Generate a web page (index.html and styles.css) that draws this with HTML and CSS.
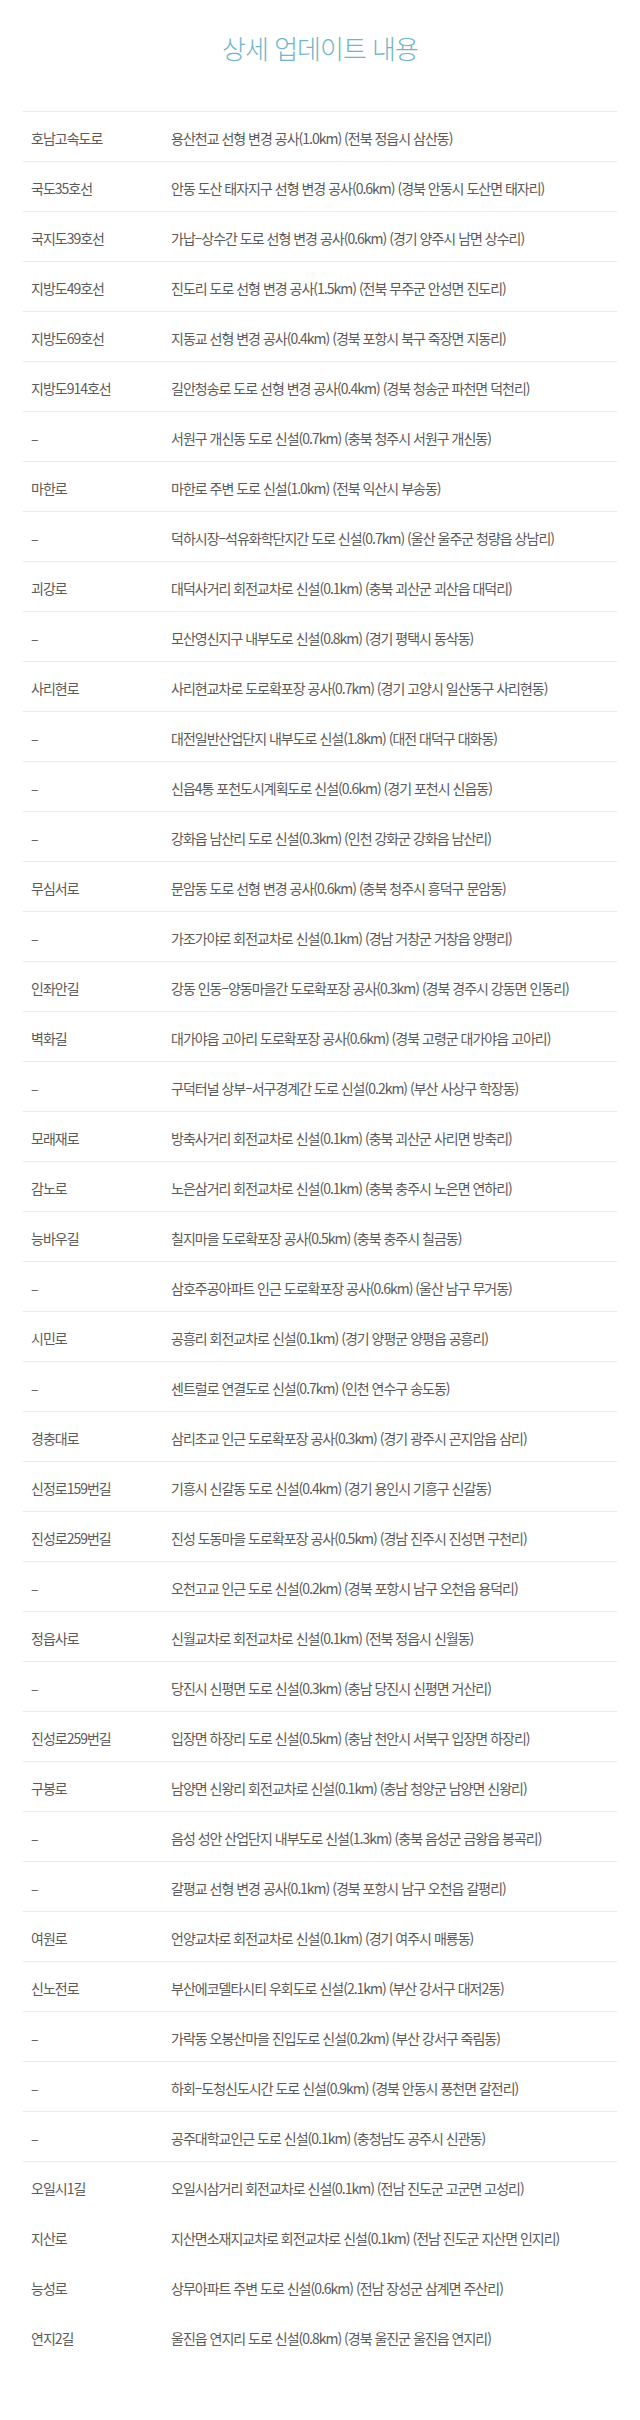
FILE: index.html
```html
<!DOCTYPE html>
<html lang="ko">
<head>
    <meta charset="UTF-8">
    <meta name="viewport" content="width=device-width, initial-scale=1.0">
    <title>상세 업데이트 내용</title>
    <link rel="stylesheet" href="styles.css">
</head>
<body>
    <h2 class="title">상세 업데이트 내용</h2>
    <div class="update-list">
        <div class="row"><div class="road">호남고속도로</div><div class="desc">용산천교 선형 변경 공사(1.0km) (전북 정읍시 삼산동)</div></div>
        <div class="row"><div class="road">국도35호선</div><div class="desc">안동 도산 태자지구 선형 변경 공사(0.6km) (경북 안동시 도산면 태자리)</div></div>
        <div class="row"><div class="road">국지도39호선</div><div class="desc">가납–상수간 도로 선형 변경 공사(0.6km) (경기 양주시 남면 상수리)</div></div>
        <div class="row"><div class="road">지방도49호선</div><div class="desc">진도리 도로 선형 변경 공사(1.5km) (전북 무주군 안성면 진도리)</div></div>
        <div class="row"><div class="road">지방도69호선</div><div class="desc">지동교 선형 변경 공사(0.4km) (경북 포항시 북구 죽장면 지동리)</div></div>
        <div class="row"><div class="road">지방도914호선</div><div class="desc">길안청송로 도로 선형 변경 공사(0.4km) (경북 청송군 파천면 덕천리)</div></div>
        <div class="row"><div class="road">–</div><div class="desc">서원구 개신동 도로 신설(0.7km) (충북 청주시 서원구 개신동)</div></div>
        <div class="row"><div class="road">마한로</div><div class="desc">마한로 주변 도로 신설(1.0km) (전북 익산시 부송동)</div></div>
        <div class="row"><div class="road">–</div><div class="desc">덕하시장–석유화학단지간 도로 신설(0.7km) (울산 울주군 청량읍 상남리)</div></div>
        <div class="row"><div class="road">괴강로</div><div class="desc">대덕사거리 회전교차로 신설(0.1km) (충북 괴산군 괴산읍 대덕리)</div></div>
        <div class="row"><div class="road">–</div><div class="desc">모산영신지구 내부도로 신설(0.8km) (경기 평택시 동삭동)</div></div>
        <div class="row"><div class="road">사리현로</div><div class="desc">사리현교차로 도로확포장 공사(0.7km) (경기 고양시 일산동구 사리현동)</div></div>
        <div class="row"><div class="road">–</div><div class="desc">대전일반산업단지 내부도로 신설(1.8km) (대전 대덕구 대화동)</div></div>
        <div class="row"><div class="road">–</div><div class="desc">신읍4통 포천도시계획도로 신설(0.6km) (경기 포천시 신읍동)</div></div>
        <div class="row"><div class="road">–</div><div class="desc">강화읍 남산리 도로 신설(0.3km) (인천 강화군 강화읍 남산리)</div></div>
        <div class="row"><div class="road">무심서로</div><div class="desc">문암동 도로 선형 변경 공사(0.6km) (충북 청주시 흥덕구 문암동)</div></div>
        <div class="row"><div class="road">–</div><div class="desc">가조가야로 회전교차로 신설(0.1km) (경남 거창군 거창읍 양평리)</div></div>
        <div class="row"><div class="road">인좌안길</div><div class="desc">강동 인동–양동마을간 도로확포장 공사(0.3km) (경북 경주시 강동면 인동리)</div></div>
        <div class="row"><div class="road">벽화길</div><div class="desc">대가야읍 고아리 도로확포장 공사(0.6km) (경북 고령군 대가야읍 고아리)</div></div>
        <div class="row"><div class="road">–</div><div class="desc">구덕터널 상부–서구경계간 도로 신설(0.2km) (부산 사상구 학장동)</div></div>
        <div class="row"><div class="road">모래재로</div><div class="desc">방축사거리 회전교차로 신설(0.1km) (충북 괴산군 사리면 방축리)</div></div>
        <div class="row"><div class="road">감노로</div><div class="desc">노은삼거리 회전교차로 신설(0.1km) (충북 충주시 노은면 연하리)</div></div>
        <div class="row"><div class="road">능바우길</div><div class="desc">칠지마을 도로확포장 공사(0.5km) (충북 충주시 칠금동)</div></div>
        <div class="row"><div class="road">–</div><div class="desc">삼호주공아파트 인근 도로확포장 공사(0.6km) (울산 남구 무거동)</div></div>
        <div class="row"><div class="road">시민로</div><div class="desc">공흥리 회전교차로 신설(0.1km) (경기 양평군 양평읍 공흥리)</div></div>
        <div class="row"><div class="road">–</div><div class="desc">센트럴로 연결도로 신설(0.7km) (인천 연수구 송도동)</div></div>
        <div class="row"><div class="road">경충대로</div><div class="desc">삼리초교 인근 도로확포장 공사(0.3km) (경기 광주시 곤지암읍 삼리)</div></div>
        <div class="row"><div class="road">신정로159번길</div><div class="desc">기흥시 신갈동 도로 신설(0.4km) (경기 용인시 기흥구 신갈동)</div></div>
        <div class="row"><div class="road">진성로259번길</div><div class="desc">진성 도동마을 도로확포장 공사(0.5km) (경남 진주시 진성면 구천리)</div></div>
        <div class="row"><div class="road">–</div><div class="desc">오천고교 인근 도로 신설(0.2km) (경북 포항시 남구 오천읍 용덕리)</div></div>
        <div class="row"><div class="road">정읍사로</div><div class="desc">신월교차로 회전교차로 신설(0.1km) (전북 정읍시 신월동)</div></div>
        <div class="row"><div class="road">–</div><div class="desc">당진시 신평면 도로 신설(0.3km) (충남 당진시 신평면 거산리)</div></div>
        <div class="row"><div class="road">진성로259번길</div><div class="desc">입장면 하장리 도로 신설(0.5km) (충남 천안시 서북구 입장면 하장리)</div></div>
        <div class="row"><div class="road">구봉로</div><div class="desc">남양면 신왕리 회전교차로 신설(0.1km) (충남 청양군 남양면 신왕리)</div></div>
        <div class="row"><div class="road">–</div><div class="desc">음성 성안 산업단지 내부도로 신설(1.3km) (충북 음성군 금왕읍 봉곡리)</div></div>
        <div class="row"><div class="road">–</div><div class="desc">갈평교 선형 변경 공사(0.1km) (경북 포항시 남구 오천읍 갈평리)</div></div>
        <div class="row"><div class="road">여원로</div><div class="desc">언양교차로 회전교차로 신설(0.1km) (경기 여주시 매룡동)</div></div>
        <div class="row"><div class="road">신노전로</div><div class="desc">부산에코델타시티 우회도로 신설(2.1km) (부산 강서구 대저2동)</div></div>
        <div class="row"><div class="road">–</div><div class="desc">가락동 오봉산마을 진입도로 신설(0.2km) (부산 강서구 죽림동)</div></div>
        <div class="row"><div class="road">–</div><div class="desc">하회–도청신도시간 도로 신설(0.9km) (경북 안동시 풍천면 갈전리)</div></div>
        <div class="row"><div class="road">–</div><div class="desc">공주대학교인근 도로 신설(0.1km) (충청남도 공주시 신관동)</div></div>
        <div class="row"><div class="road">오일시1길</div><div class="desc">오일시삼거리 회전교차로 신설(0.1km) (전남 진도군 고군면 고성리)</div></div>
        <div class="row no-line"><div class="road">지산로</div><div class="desc">지산면소재지교차로 회전교차로 신설(0.1km) (전남 진도군 지산면 인지리)</div></div>
        <div class="row no-line"><div class="road">능성로</div><div class="desc">상무아파트 주변 도로 신설(0.6km) (전남 장성군 삼계면 주산리)</div></div>
        <div class="row no-line"><div class="road">연지2길</div><div class="desc">울진읍 연지리 도로 신설(0.8km) (경북 울진군 울진읍 연지리)</div></div>
    </div>
</body>
</html>
```

FILE: styles.css
```css
body {
    margin: 0;
    background: #fff;
    font-family: "Noto Sans CJK KR", "Noto Sans", sans-serif;
    color: #5a5a5a;
}
.title {
    margin: 0 0 48px;
    padding-top: 33px;
    font-size: 26px;
    line-height: 30px;
    font-weight: 300;
    letter-spacing: -1px;
    text-align: center;
    color: #72b5c9;
}
.update-list {
    width: 594px;
    margin-left: 23px;
}
.row {
    display: grid;
    grid-template-columns: 148px 1fr;
    align-items: center;
    height: 50px;
    border-top: 1px solid #ebebeb;
    box-sizing: border-box;
    font-size: 14px;
    letter-spacing: -1px;
    white-space: nowrap;
}
.row.no-line {
    border-top: none;
}
.road {
    padding-left: 8px;
    padding-top: 3px;
}
.desc {
    padding-top: 3px;
}
```
